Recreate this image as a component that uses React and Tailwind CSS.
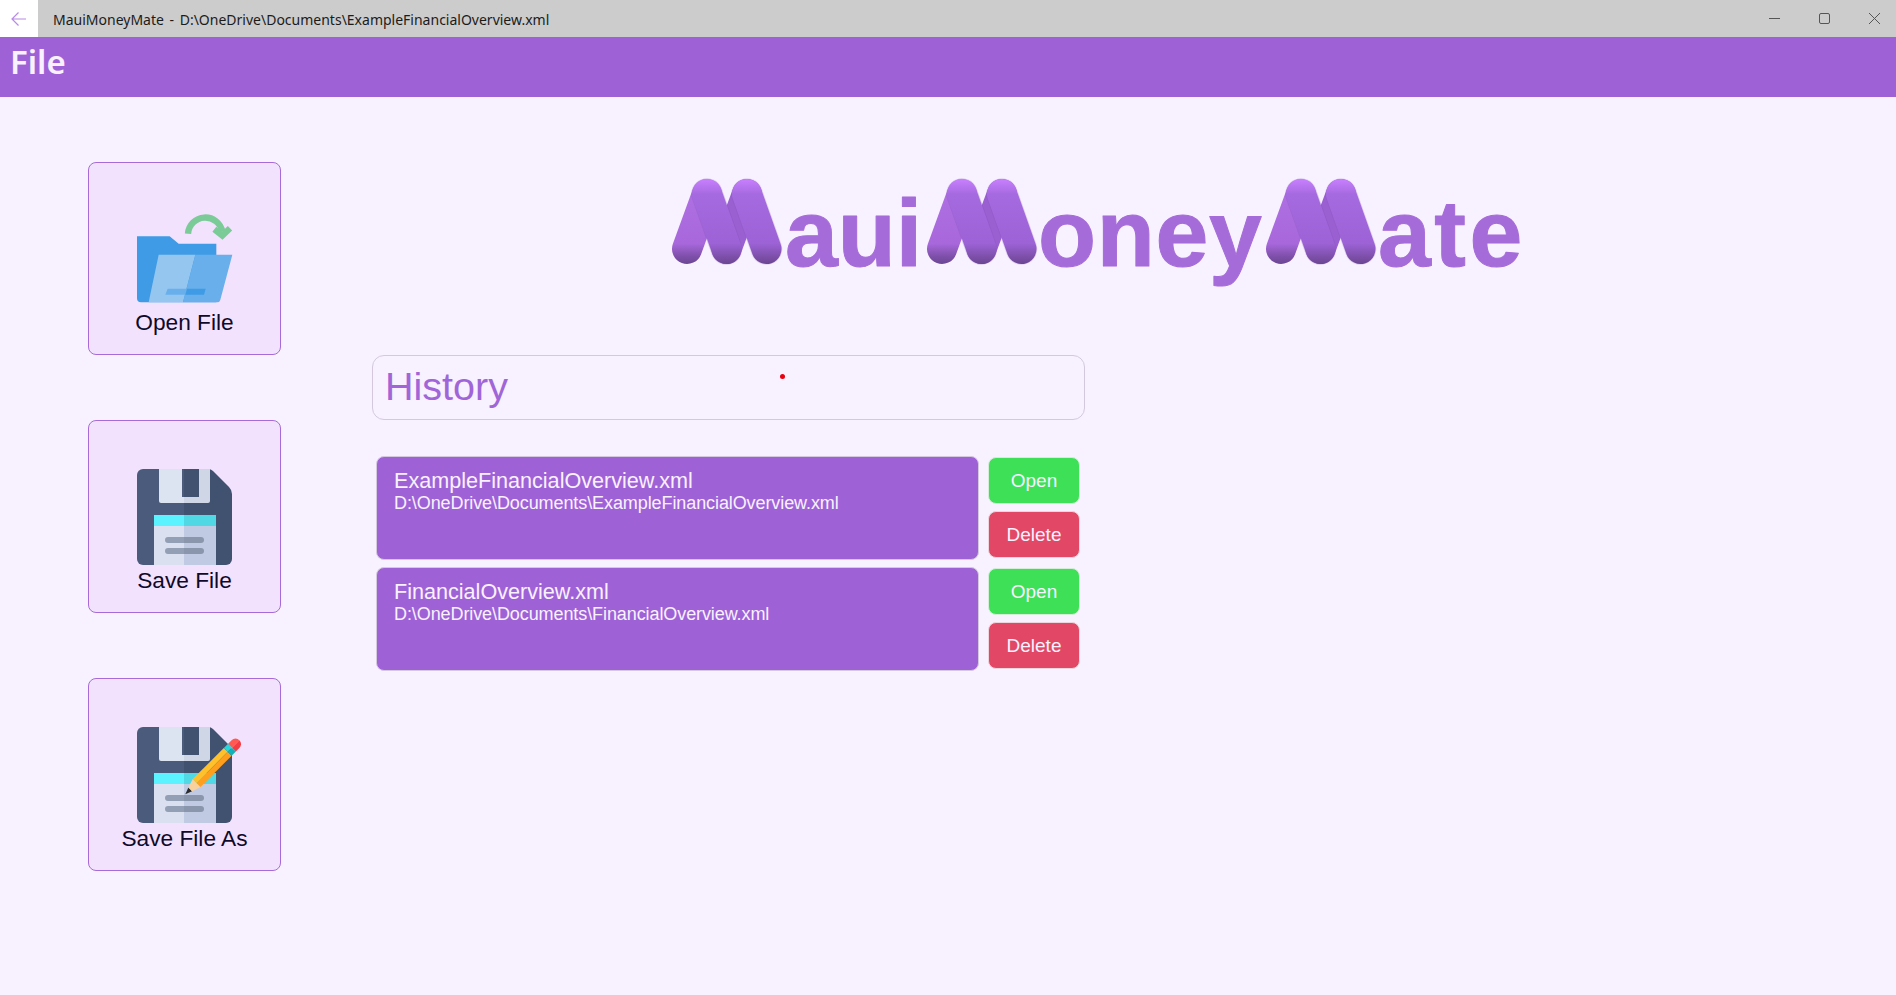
const cardClass =
  "w-[193px] h-[193px] flex flex-col items-center justify-end pb-[19px] rounded-lg border border-[#a66bd8] bg-[#f3e2fd]";

function FloppyBase() {
  return (
    <>
      <path d="M6 0H47V96H6a6 6 0 0 1-6-6V6a6 6 0 0 1 6-6Z" fill="#4a5b7b" />
      <path d="M47 0H71Q74 0 76 2L92 18Q95 21 95 25V90a6 6 0 0 1-6 6H47Z" fill="#415170" />
      <path d="M22 0H47V34H24a2 2 0 0 1-2-2Z" fill="#dce3f1" />
      <path d="M47 0H73V32a2 2 0 0 1-2 2H47Z" fill="#cfd6e5" />
      <rect x="45" y="0" width="2" height="28" fill="#4a5b7b" />
      <rect x="47" y="0" width="15" height="28" fill="#415170" />
      <rect x="17" y="46" width="30" height="11" fill="#5af3ff" />
      <rect x="47" y="46" width="32" height="11" fill="#50d8e5" />
      <rect x="17" y="57" width="30" height="39" fill="#dae0f0" />
      <rect x="47" y="57" width="32" height="39" fill="#c0cbe3" />
      <path d="M31 68H47V74H31a3 3 0 0 1 0-6ZM31 79H47V85H31a3 3 0 0 1 0-6Z" fill="#939fb5" />
      <path d="M47 68H64a3 3 0 0 1 0 6H47ZM47 79H64a3 3 0 0 1 0 6H47Z" fill="#8a96ab" />
    </>
  );
}

function OpenIcon() {
  return (
    <svg width="96" height="91" viewBox="170 175 288 273" className="mb-[5px] ml-[1px]">
      <path d="M170 245H268L295 267H408V443H182a12 12 0 0 1-12-12Z" fill="#3f9be5" />
      <path d="M235 300H345L308 443H205Z" fill="#95c6f0" />
      <path d="M345 300H456L420 435a10 10 0 0 1-10 8H308Z" fill="#68afeb" />
      <path d="M262 402H320L315 420H255Z" fill="#68afeb" />
      <path d="M320 402H376L371 420H315Z" fill="#3f9be5" />
      <path d="M323 237a52 52 0 0 1 103 -6" fill="none" stroke="#7bcb98" strokeWidth="19" />
      <path d="M402 224L426 243L449 221" fill="none" stroke="#7bcb98" strokeWidth="19" />
    </svg>
  );
}

function SaveIcon() {
  return (
    <svg width="96" height="96" viewBox="0 0 96 96" className="mb-[2px]">
      <FloppyBase />
    </svg>
  );
}

function SaveAsIcon() {
  return (
    <svg width="104" height="96" viewBox="0 0 104 96" className="mb-[2px] ml-[8px]">
      <FloppyBase />
      <g transform="translate(48.3 67.3) rotate(-45)">
        <path d="M0 0L7 -2.6V2.6Z" fill="#2b2b2b" />
        <path d="M7 -2.6L16 -5.5V5.5L7 2.6Z" fill="#f9d19c" />
        <rect x="16" y="-5.5" width="44" height="5.5" fill="#ffc12b" />
        <rect x="16" y="0" width="44" height="5.5" fill="#ff9f1c" />
        <rect x="60" y="-5.5" width="6" height="5.5" fill="#25d6dc" />
        <rect x="60" y="0" width="6" height="5.5" fill="#10b3ba" />
        <path d="M66 -5.5H71a5.5 5.5 0 0 1 5.5 5.5H66Z" fill="#ff5a52" />
        <path d="M66 0H76.5a5.5 5.5 0 0 1-5.5 5.5H66Z" fill="#f23d45" />
      </g>
    </svg>
  );
}

// the pill shaped M of the logo
function LogoM({ x }) {
  return (
    <g transform={`translate(${x} 0)`}>
      <line x1="15" y1="70" x2="35" y2="15" stroke="url(#pillLeft)" strokeWidth="30" strokeLinecap="round" />
      <line x1="54.5" y1="70" x2="75" y2="15" stroke="#9a60d2" strokeWidth="30" strokeLinecap="round" />
      <line x1="35" y1="15" x2="54.5" y2="70" stroke="#7b4cb0" strokeOpacity="0.25" strokeWidth="31.5" strokeLinecap="round" />
      <line x1="35" y1="15" x2="54.5" y2="70" stroke="url(#pillFront)" strokeWidth="30" strokeLinecap="round" />
      <line x1="75" y1="15" x2="94.5" y2="70" stroke="#7b4cb0" strokeOpacity="0.2" strokeWidth="31.5" strokeLinecap="round" />
      <line x1="75" y1="15" x2="94.5" y2="70" stroke="url(#pillFront)" strokeWidth="30" strokeLinecap="round" />
    </g>
  );
}

function Logo() {
  const textProps = {
    y: 87,
    fill: "#a56cd9",
    stroke: "#a56cd9",
    strokeWidth: 1,
    strokeLinejoin: "round",
    fontFamily: "Liberation Sans, sans-serif",
    fontWeight: 700,
    fontSize: 95,
  };
  return (
    <svg width="854" height="110" viewBox="0 0 854 110" className="overflow-visible">
      <defs>
        <linearGradient id="pillFront" gradientUnits="userSpaceOnUse" x1="0" y1="0" x2="0" y2="86">
          <stop offset="0" stopColor="#c97fff" />
          <stop offset="0.18" stopColor="#a56adf" />
          <stop offset="0.75" stopColor="#9c62d6" />
          <stop offset="0.9" stopColor="#7e50aa" />
          <stop offset="1" stopColor="#68448e" />
        </linearGradient>
        <linearGradient id="pillLeft" gradientUnits="userSpaceOnUse" x1="0" y1="0" x2="0" y2="86">
          <stop offset="0" stopColor="#c97fff" />
          <stop offset="0.2" stopColor="#ae6fe2" />
          <stop offset="0.75" stopColor="#a868dc" />
          <stop offset="0.9" stopColor="#7e50aa" />
          <stop offset="1" stopColor="#68448e" />
        </linearGradient>
      </defs>
      <LogoM x={0} />
      <text {...textProps} x="113">aui</text>
      <LogoM x={255} />
      <text {...textProps} x="366" letterSpacing="0.7">oney</text>
      <LogoM x={594} />
      <text {...textProps} x="706" letterSpacing="3.5">ate</text>
    </svg>
  );
}

function HistoryRow({ name, path }) {
  return (
    <div className="flex">
      <div className="w-[603px] h-[104px] rounded-lg border border-[#d5c9e0] bg-[#9f62d6] pl-[17px] pt-[11px] text-[#f8f1ff]">
        <div className="text-[21.6px] leading-[26px]">{name}</div>
        <div className="text-[18px] leading-[18px] tracking-[-0.09px]">{path}</div>
      </div>
      <div className="ml-[9px] mt-[1px] flex flex-col gap-[7px]">
        <button className="w-[92px] h-[47px] pt-[1px] rounded-lg border border-[#d5ecd9] bg-[#3ee058] text-[19px] text-[#f8f1ff]">
          Open
        </button>
        <button className="w-[92px] h-[47px] pt-[1px] rounded-lg border border-[#ecd5dc] bg-[#e24865] text-[19px] text-[#f8f1ff]">
          Delete
        </button>
      </div>
    </div>
  );
}

export default function App() {
  return (
    <div className="w-[1896px] h-[995px] overflow-hidden flex flex-col bg-[#f8f1ff] font-['Liberation_Sans',sans-serif]">
      {/* window title bar */}
      <div className="h-[37px] flex items-center bg-[#cccccc]">
        <div className="w-[38px] h-full flex items-center justify-center bg-white">
          <svg width="16" height="16" viewBox="0 0 16 16" fill="none" stroke="#b98ae6" strokeWidth="1.2">
            <path d="M15 8H1M7.5 1.5L1 8l6.5 6.5" />
          </svg>
        </div>
        <div className="ml-[15px] pt-[1px] font-['Noto_Sans',sans-serif] text-[14px] [word-spacing:2px] text-[#1b1b1b]">
          MauiMoneyMate - D:\OneDrive\Documents\ExampleFinancialOverview.xml
        </div>
        <div className="ml-auto flex items-center gap-[39px] pr-[16px]">
          <svg width="11" height="11" viewBox="0 0 11 11" fill="none" stroke="#555555">
            <path d="M0 5.5H11" />
          </svg>
          <svg width="11" height="11" viewBox="0 0 11 11" fill="none" stroke="#555555">
            <rect x="0.5" y="0.5" width="10" height="10" rx="1.5" />
          </svg>
          <svg width="11" height="11" viewBox="0 0 11 11" fill="none" stroke="#555555">
            <path d="M0 0L11 11M11 0L0 11" />
          </svg>
        </div>
      </div>

      {/* menu bar */}
      <div className="h-[60px] bg-[#9f62d6] pl-[10px] pt-[3px] font-['Noto_Sans',sans-serif] text-[33px] leading-[44px] font-semibold text-[#f8f1ff]">
        File
      </div>

      <div className="flex flex-1">
        <div className="ml-[88px] mt-[65px] flex flex-col gap-[65px] text-[22.7px] leading-[26px] text-[#0f0a2a]">
          <div className={cardClass}>
            <OpenIcon />
            <span>Open File</span>
          </div>
          <div className={cardClass}>
            <SaveIcon />
            <span>Save File</span>
          </div>
          <div className={cardClass}>
            <SaveAsIcon />
            <span>Save File As</span>
          </div>
        </div>

        <div className="ml-[91px] mt-[82px] flex flex-col">
          <div className="ml-[300px]">
            <Logo />
          </div>
          <div className="relative mt-[66px] w-[713px] h-[65px] rounded-xl border border-[#d3c9dc] pl-[12px] pb-[1px] flex items-center text-[39.5px] text-[#a066d8]">
            History
            <span className="absolute left-[407px] top-[18px] w-[5px] h-[5px] rounded-full bg-[#e8000f]"></span>
          </div>
          <div className="ml-[4px] mt-[36px] flex flex-col gap-[7px]">
            <HistoryRow name="ExampleFinancialOverview.xml" path="D:\OneDrive\Documents\ExampleFinancialOverview.xml" />
            <HistoryRow name="FinancialOverview.xml" path="D:\OneDrive\Documents\FinancialOverview.xml" />
          </div>
        </div>
      </div>
    </div>
  );
}
